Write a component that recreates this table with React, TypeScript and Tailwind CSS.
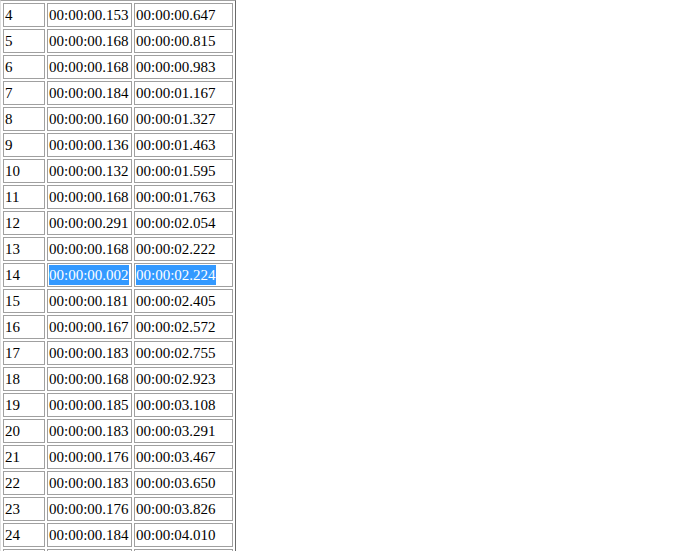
import React from "react";

const rows: [number, string, string][] = [
  [4, "00:00:00.153", "00:00:00.647"],
  [5, "00:00:00.168", "00:00:00.815"],
  [6, "00:00:00.168", "00:00:00.983"],
  [7, "00:00:00.184", "00:00:01.167"],
  [8, "00:00:00.160", "00:00:01.327"],
  [9, "00:00:00.136", "00:00:01.463"],
  [10, "00:00:00.132", "00:00:01.595"],
  [11, "00:00:00.168", "00:00:01.763"],
  [12, "00:00:00.291", "00:00:02.054"],
  [13, "00:00:00.168", "00:00:02.222"],
  [14, "00:00:00.002", "00:00:02.224"],
  [15, "00:00:00.181", "00:00:02.405"],
  [16, "00:00:00.167", "00:00:02.572"],
  [17, "00:00:00.183", "00:00:02.755"],
  [18, "00:00:00.168", "00:00:02.923"],
  [19, "00:00:00.185", "00:00:03.108"],
  [20, "00:00:00.183", "00:00:03.291"],
  [21, "00:00:00.176", "00:00:03.467"],
  [22, "00:00:00.183", "00:00:03.650"],
  [23, "00:00:00.176", "00:00:03.826"],
  [24, "00:00:00.184", "00:00:04.010"],
];

const cell =
  "border border-[#a0a0a0] p-px h-[24px] align-middle text-left whitespace-nowrap";

export default function App() {
  return (
    <div
      className="h-[551px] w-[687px] overflow-hidden bg-white text-black text-[15px] leading-[20px]"
      style={{ fontFamily: '"Liberation Serif", "Times New Roman", serif' }}
    >
      <table className="border-separate border-spacing-[2px] border border-t-[#a0a0a0] border-l-[#e0e0e0] border-r-[#6a6a6a] border-b-[#6a6a6a]">
        <tbody>
          {rows.map(([n, a, b]) => {
            const sel = n === 14;
            return (
              <tr key={n}>
                <td className={`${cell} w-[42px]`}>{n}</td>
                <td className={`${cell} w-[85px]`}>
                  {sel ? (
                    <span className="inline-block bg-[#3399ff] text-white leading-[20px]">{a}</span>
                  ) : (
                    a
                  )}
                </td>
                <td className={`${cell} w-[99px]`}>
                  {sel ? (
                    <span className="inline-block bg-[#3399ff] text-white leading-[20px]">{b}</span>
                  ) : (
                    b
                  )}
                </td>
              </tr>
            );
          })}
          <tr>
            <td className={`${cell} w-[42px]`}></td>
            <td className={`${cell} w-[85px]`}></td>
            <td className={`${cell} w-[99px]`}></td>
          </tr>
        </tbody>
      </table>
    </div>
  );
}
